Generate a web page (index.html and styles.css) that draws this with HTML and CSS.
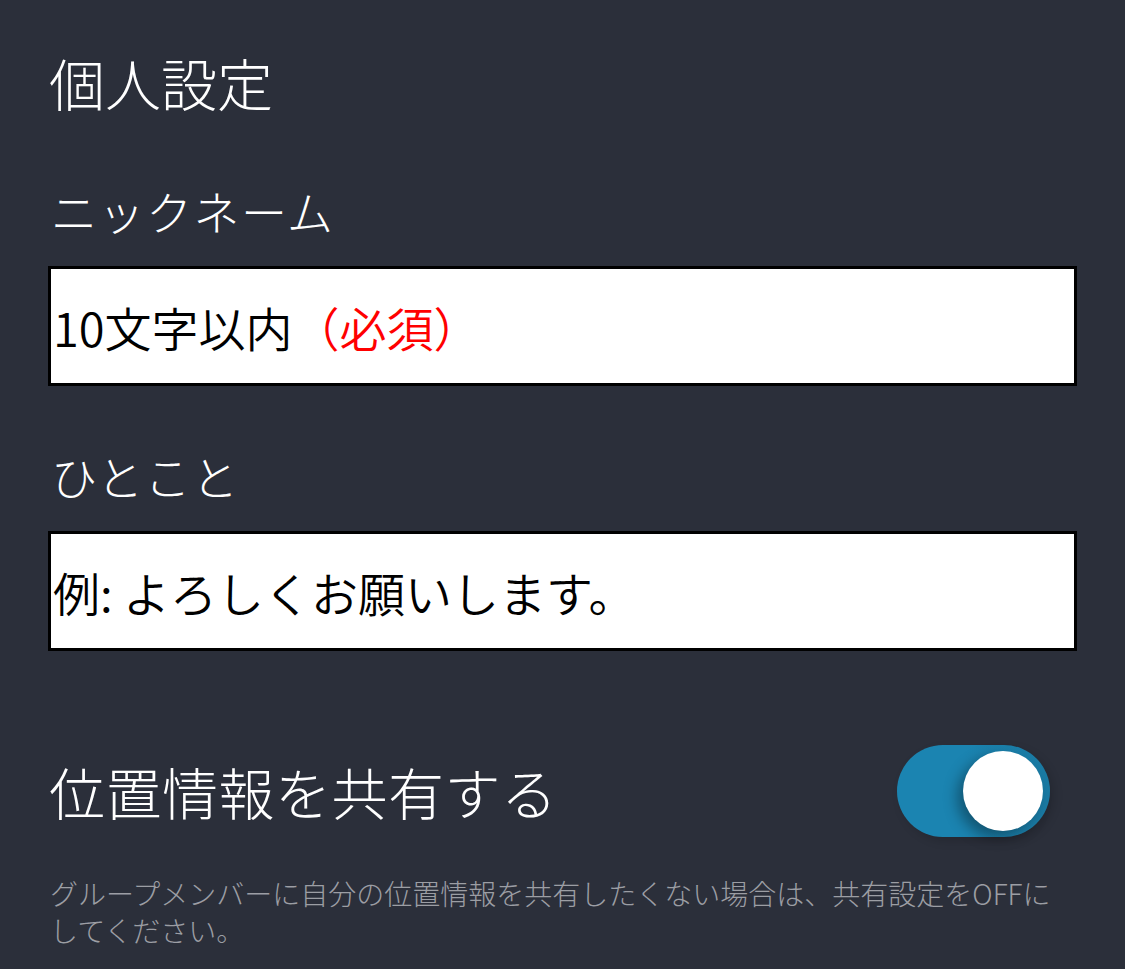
FILE: index.html
```html
<!DOCTYPE html>
<html lang="ja">
<head>
<meta charset="utf-8">
<title>個人設定</title>
<link rel="stylesheet" href="styles.css">
</head>
<body>
<main class="page">
  <h1 class="title">個人設定</h1>

  <section class="field">
    <div class="label">ニックネーム</div>
    <div class="box"><span class="ph">10文字以内</span><span class="req">（必須）</span></div>
  </section>

  <section class="field">
    <div class="label">ひとこと</div>
    <div class="box"><span class="ph">例: よろしくお願いします。</span></div>
  </section>

  <div class="row">
    <div class="row-title">位置情報を共有する</div>
    <div class="toggle"><div class="knob"></div></div>
  </div>

  <p class="note">グループメンバーに自分の位置情報を共有したくない場合は、共有設定をOFFにしてください。</p>
</main>
</body>
</html>
```

FILE: styles.css
```css
html, body {
  margin: 0;
  padding: 0;
  background: #2b2f3a;
}

body {
  font-family: "Noto Sans CJK JP", "Noto Sans", sans-serif;
  font-weight: 300;
  color: #ffffff;
}

.page {
  padding: 47px 48px 0 48px;
}

.title {
  margin: 0;
  font-size: 56px;
  font-weight: 300;
  line-height: 70px;
  padding-left: 1px;
}

.field {
  margin-top: 63px;
}

.field + .field {
  margin-top: 59px;
}

.label {
  font-size: 46px;
  line-height: 60px;
  letter-spacing: 1.5px;
  padding-left: 3px;
  margin-bottom: 26px;
}

.box {
  box-sizing: border-box;
  height: 120px;
  background: #ffffff;
  border: 3px solid #000000;
  display: flex;
  align-items: center;
  padding-left: 2px;
  font-size: 47px;
  font-weight: 350;
  color: #000000;
}

.req {
  color: #ff0000;
}

.row {
  margin-top: 94px;
  display: flex;
  align-items: center;
  justify-content: space-between;
}

.row-title {
  font-size: 56px;
  line-height: 70px;
  letter-spacing: 0.5px;
  padding-left: 1px;
}

.toggle {
  width: 153px;
  height: 92px;
  border-radius: 46px;
  background: linear-gradient(90deg, #1b84b1 0%, #1b84b1 45%, #1a7aa3 100%);
  margin-right: 27px;
  display: flex;
  align-items: center;
  justify-content: flex-end;
  padding-right: 7px;
  box-sizing: border-box;
  box-shadow: 4px 4px 10px rgba(0, 0, 0, 0.15);
}

.knob {
  width: 80px;
  height: 80px;
  border-radius: 50%;
  background: #ffffff;
  box-shadow: -6px 6px 14px rgba(0, 0, 0, 0.35);
}

.note {
  margin: 38px 0 0 0;
  font-size: 28px;
  line-height: 37px;
  color: #9c9ea4;
  padding-left: 2px;
}
```
